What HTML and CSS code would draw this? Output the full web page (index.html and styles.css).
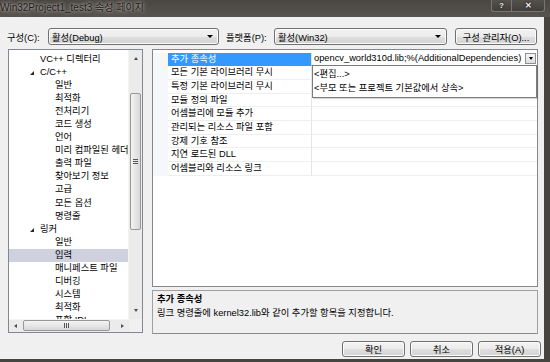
FILE: index.html
```html
<!DOCTYPE html>
<html lang="ko">
<head>
    <meta charset="UTF-8">
    <title>Win32Project1_test3 속성 페이지</title>
    <link rel="stylesheet" href="styles.css">
</head>
<body>
<div class="window">
    <div class="titlebar">
        <div class="title">Win32Project1_test3 속성 페이지</div>
        <div class="caption-buttons">
            <div class="cap cap-help">?</div>
            <div class="cap cap-close">✕</div>
        </div>
    </div>

    <div class="client">
        <div class="toolbar">
            <div class="label label-config">구성(C):</div>
            <div class="combo combo-config"><span class="combo-text">활성(Debug)</span><span class="combo-arrow"></span></div>
            <div class="label label-platform">플랫폼(P):</div>
            <div class="combo combo-platform"><span class="combo-text">활성(Win32)</span><span class="combo-arrow"></span></div>
            <div class="btn btn-manager">구성 관리자(O)...</div>
        </div>

        <div class="main">
            <div class="tree">
                <div class="tree-top">
                    <div class="tree-items">
                        <div class="node l1">VC++ 디렉터리</div>
                        <div class="node l1 open"><span class="expander"></span>C/C++</div>
                        <div class="node l2">일반</div>
                        <div class="node l2">최적화</div>
                        <div class="node l2">전처리기</div>
                        <div class="node l2">코드 생성</div>
                        <div class="node l2">언어</div>
                        <div class="node l2">미리 컴파일된 헤더</div>
                        <div class="node l2">출력 파일</div>
                        <div class="node l2">찾아보기 정보</div>
                        <div class="node l2">고급</div>
                        <div class="node l2">모든 옵션</div>
                        <div class="node l2">명령줄</div>
                        <div class="node l1 open"><span class="expander"></span>링커</div>
                        <div class="node l2">일반</div>
                        <div class="node l2 selected">입력</div>
                        <div class="node l2">매니페스트 파일</div>
                        <div class="node l2">디버깅</div>
                        <div class="node l2">시스템</div>
                        <div class="node l2">최적화</div>
                        <div class="node l2">포함 IDL</div>
                    </div>
                    <div class="vscroll">
                        <div class="sb-btn"><span class="tri tri-up"></span></div>
                        <div class="vtrack">
                            <div class="vthumb"><span class="grip-h"></span></div>
                        </div>
                        <div class="sb-btn"><span class="tri tri-down"></span></div>
                    </div>
                </div>
                <div class="tree-bottom">
                    <div class="hscroll">
                        <div class="sb-btn-h"><span class="tri tri-left"></span></div>
                        <div class="htrack">
                            <div class="hthumb"><span class="grip-v"></span></div>
                        </div>
                        <div class="sb-btn-h"><span class="tri tri-right"></span></div>
                    </div>
                    <div class="corner"></div>
                </div>
            </div>

            <div class="right">
                <div class="grid">
                    <div class="row selected">
                        <div class="gutter"></div>
                        <div class="name">추가 종속성</div>
                        <div class="value editing">
                            <span class="value-text">opencv_world310d.lib;%(AdditionalDependencies)</span>
                            <span class="drop-btn"><span class="tri tri-down"></span></span>
                        </div>
                    </div>
                    <div class="row"><div class="gutter"></div><div class="name">모든 기본 라이브러리 무시</div><div class="value"></div></div>
                    <div class="row"><div class="gutter"></div><div class="name">특정 기본 라이브러리 무시</div><div class="value"></div></div>
                    <div class="row"><div class="gutter"></div><div class="name">모듈 정의 파일</div><div class="value"></div></div>
                    <div class="row"><div class="gutter"></div><div class="name">어셈블리에 모듈 추가</div><div class="value"></div></div>
                    <div class="row"><div class="gutter"></div><div class="name">관리되는 리소스 파일 포함</div><div class="value"></div></div>
                    <div class="row"><div class="gutter"></div><div class="name">강제 기호 참조</div><div class="value"></div></div>
                    <div class="row"><div class="gutter"></div><div class="name">지연 로드된 DLL</div><div class="value"></div></div>
                    <div class="row"><div class="gutter"></div><div class="name">어셈블리와 리소스 링크</div><div class="value"></div></div>

                    <div class="popup">
                        <div class="popup-item">&lt;편집...&gt;</div>
                        <div class="popup-item">&lt;부모 또는 프로젝트 기본값에서 상속&gt;</div>
                    </div>
                </div>
                <div class="desc">
                    <div class="desc-title">추가 종속성</div>
                    <div class="desc-text">링크 명령줄에 kernel32.lib와 같이 추가할 항목을 지정합니다.</div>
                </div>
            </div>
        </div>

        <div class="buttons">
            <div class="btn btn-dialog">확인</div>
            <div class="btn btn-dialog">취소</div>
            <div class="btn btn-dialog">적용(A)</div>
        </div>
    </div>
</div>
</body>
</html>
```

FILE: styles.css
```css
body {
    margin: 0;
    width: 550px;
    height: 362px;
    overflow: hidden;
    background: #47443f;
    font-family: "Liberation Sans", "Noto Sans CJK KR", sans-serif;
    font-size: 9.3px;
    color: #000;
}
.window {
    display: flex;
    flex-direction: column;
    height: 362px;
}

/* title bar */
.titlebar {
    height: 17px;
    display: flex;
    align-items: flex-start;
    background: linear-gradient(#4a4642, #57534e);
    flex: none;
}
.title {
    line-height: 16px;
    font-size: 10px;
    color: #1b1b1b;
    text-shadow: 0 0 3px rgba(225, 220, 212, 0.9), 0 0 7px rgba(225, 220, 212, 0.5);
    white-space: nowrap;
}
.caption-buttons {
    margin-left: auto;
    margin-right: 5px;
    display: flex;
}
.cap {
    height: 11px;
    border: 1px solid #7a7570;
    border-top: none;
    background: linear-gradient(#55514c, #423f3b);
    color: #f2f2f2;
    font-weight: bold;
    font-size: 8px;
    line-height: 11px;
    text-align: center;
    text-shadow: 0 0 2px #000;
}
.cap-help {
    width: 19px;
    border-radius: 0 0 0 3px;
    border-right: none;
}
.cap-close {
    width: 32px;
    border-radius: 0 0 3px 0;
}

/* client area */
.client {
    width: 544px;
    height: 342px;
    background: #f0f0f0;
    display: flex;
    flex-direction: column;
    flex: none;
}
.toolbar {
    display: flex;
    align-items: center;
    height: 17px;
    margin-top: 11px;
    padding-left: 7px;
}
.label {
    white-space: nowrap;
}
.label-config {
    width: 41px;
}
.label-platform {
    width: 48px;
    margin-left: 7px;
}
.combo, .btn {
    box-sizing: border-box;
    height: 17px;
    border: 1px solid #707070;
    border-radius: 3px;
    background: linear-gradient(#f3f3f3 0%, #ebebeb 50%, #dedede 51%, #d3d3d3 100%);
    box-shadow: inset 0 0 0 1px #fbfbfb;
}
.combo {
    display: flex;
    align-items: center;
    padding: 0 4px 0 3px;
}
.combo-config {
    width: 171px;
}
.combo-platform {
    width: 173px;
}
.combo-text {
    flex: 1;
}
.combo-arrow {
    width: 0;
    height: 0;
    border-left: 3px solid transparent;
    border-right: 3px solid transparent;
    border-top: 3px solid #000;
    margin-right: 1px;
}
.btn {
    display: flex;
    align-items: center;
    justify-content: center;
    white-space: nowrap;
}
.btn-manager {
    width: 82px;
    margin-left: 8px;
}

/* main panes */
.main {
    display: flex;
    margin-top: 4px;
    padding-left: 8px;
    height: 285px;
    gap: 9px;
}
.tree {
    box-sizing: border-box;
    width: 135px;
    height: 284px;
    border: 1px solid #828790;
    background: #fff;
    display: flex;
    flex-direction: column;
}
.tree-top {
    display: flex;
    height: 269px;
}
.tree-items {
    flex: 1;
    overflow: hidden;
    padding-top: 2.5px;
}
.node {
    height: 13.1px;
    line-height: 13.1px;
    white-space: nowrap;
    position: relative;
}
.node.l1 {
    padding-left: 31px;
}
.node.l2 {
    padding-left: 46px;
}
.node.selected {
    background: #cfd1df;
}
.expander {
    position: absolute;
    left: 21px;
    top: 5px;
    width: 0;
    height: 0;
    border-left: 4px solid transparent;
    border-bottom: 4px solid #262626;
}

/* scroll bars */
.vscroll {
    width: 13px;
    display: flex;
    flex-direction: column;
    background: #ebebeb;
    border-left: 1px solid #f4f4f4;
}
.sb-btn {
    height: 17px;
    display: flex;
    align-items: center;
    justify-content: center;
}
.vtrack {
    flex: 1;
    padding-top: 26px;
}
.vthumb {
    box-sizing: border-box;
    margin: 0 1px;
    height: 137px;
    border: 1px solid #979797;
    border-radius: 2px;
    background: linear-gradient(90deg, #f4f4f4, #e6e6e6 50%, #d8d8d8);
    display: flex;
    align-items: center;
    justify-content: center;
}
.grip-h {
    width: 5px;
    height: 5px;
    background: repeating-linear-gradient(#555 0 1px, transparent 1px 2px);
}
.tree-bottom {
    display: flex;
    height: 13px;
}
.hscroll {
    flex: 1;
    display: flex;
    background: #ebebeb;
    border-top: 1px solid #f4f4f4;
}
.sb-btn-h {
    width: 13px;
    display: flex;
    align-items: center;
    justify-content: center;
}
.htrack {
    flex: 1;
    padding-left: 1px;
    padding-right: 6px;
}
.hthumb {
    box-sizing: border-box;
    height: 11px;
    border: 1px solid #979797;
    border-radius: 2px;
    background: linear-gradient(#f4f4f4, #e6e6e6 50%, #d6d6d6);
    display: flex;
    align-items: center;
    justify-content: center;
}
.grip-v {
    width: 5px;
    height: 5px;
    background: repeating-linear-gradient(90deg, #555 0 1px, transparent 1px 2px);
}
.corner {
    width: 13px;
    background: #f0f0f0;
}
.tri {
    width: 0;
    height: 0;
}
.tri-up {
    border-left: 2.5px solid transparent;
    border-right: 2.5px solid transparent;
    border-bottom: 3px solid #4d4d4d;
}
.tri-down {
    border-left: 2.5px solid transparent;
    border-right: 2.5px solid transparent;
    border-top: 3px solid #4d4d4d;
}
.tri-left {
    border-top: 2.5px solid transparent;
    border-bottom: 2.5px solid transparent;
    border-right: 3px solid #4d4d4d;
}
.tri-right {
    border-top: 2.5px solid transparent;
    border-bottom: 2.5px solid transparent;
    border-left: 3px solid #4d4d4d;
}

/* property grid */
.right {
    width: 386px;
    display: flex;
    flex-direction: column;
}
.grid {
    box-sizing: border-box;
    height: 238px;
    border: 1px solid #828790;
    background: #fff;
    padding-top: 2.5px;
    position: relative;
}
.row {
    display: flex;
    height: 13.7px;
    line-height: 13px;
}
.gutter {
    width: 15px;
    background: #f5f7fb;
}
.name {
    width: 144px;
    padding-left: 3px;
    box-sizing: border-box;
    border-bottom: 1px solid #eeeeee;
    border-right: 1px solid #e4e4e4;
    white-space: nowrap;
    overflow: hidden;
}
.value {
    flex: 1;
    border-bottom: 1px solid #eeeeee;
    position: relative;
}
.row.selected .name {
    background: #3399ff;
    color: #fff;
    border-bottom-color: #3399ff;
}
.value.editing {
    display: flex;
    align-items: center;
    overflow: hidden;
}
.value-text {
    flex: 1;
    padding-left: 2px;
    white-space: nowrap;
    overflow: hidden;
}
.drop-btn {
    box-sizing: border-box;
    width: 11px;
    height: 11px;
    margin-right: 1px;
    border: 1px solid #8f8f8f;
    background: linear-gradient(#f6f6f6, #dedede);
    display: flex;
    align-items: center;
    justify-content: center;
}
.drop-btn .tri-down {
    border-top-color: #000;
}
.popup {
    position: absolute;
    left: 159px;
    top: 15px;
    width: 225px;
    height: 33px;
    box-sizing: border-box;
    border: 1px solid #7b7b7b;
    background: #fff;
    box-shadow: 1px 1px 1px rgba(0, 0, 0, 0.15);
    padding-top: 2px;
}
.popup-item {
    height: 13.5px;
    line-height: 13.5px;
    padding-left: 1px;
    white-space: nowrap;
}

/* description */
.desc {
    box-sizing: border-box;
    margin-top: 3px;
    height: 44px;
    border: 1px solid #a0a0a0;
    border-bottom-color: #8a8a8a;
    background: #f0f0f0;
    padding: 1px 4px;
}
.desc-title {
    font-weight: bold;
    line-height: 14px;
}
.desc-text {
    line-height: 15px;
}

/* dialog buttons */
.buttons {
    display: flex;
    justify-content: flex-end;
    gap: 5px;
    margin-top: 7px;
    padding-right: 3px;
}
.btn-dialog {
    width: 63px;
    height: 16px;
}
```
